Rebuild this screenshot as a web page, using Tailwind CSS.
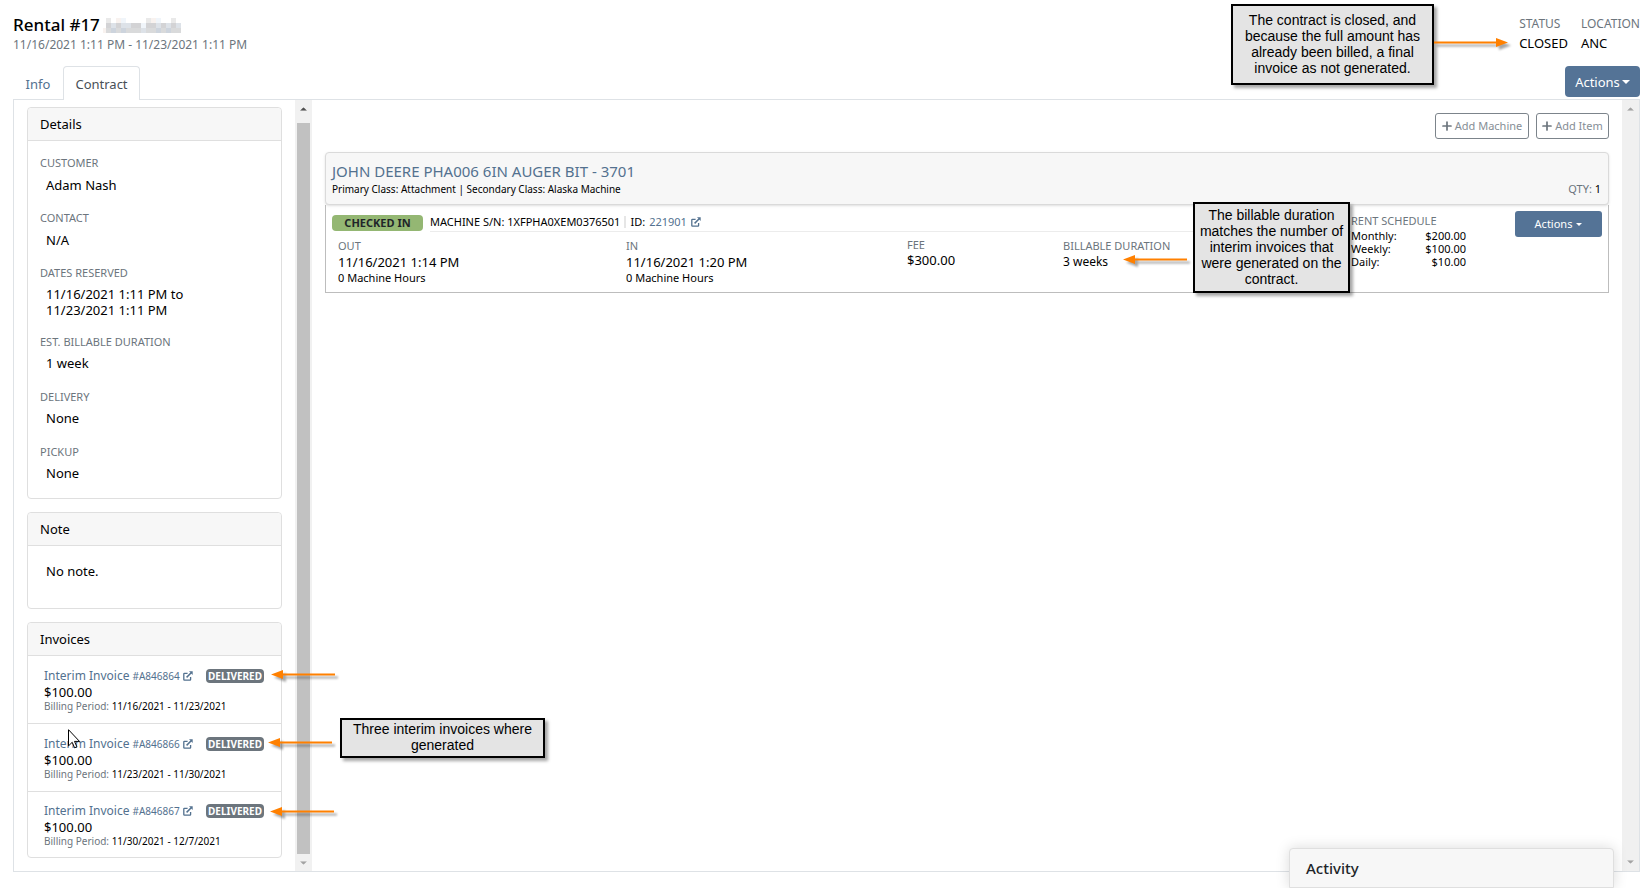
<!DOCTYPE html>
<html lang="en">
<head>
<meta charset="utf-8">
<meta name="viewport" content="width=device-width, initial-scale=1">
<title>Rental #17</title>
<script src="https://cdn.jsdelivr.net/npm/@tailwindcss/browser@4"></script>
</head>
<body class="bg-white text-black font-['Noto_Sans','Open_Sans',sans-serif] text-[13px] leading-4">
<svg class="hidden" aria-hidden="true">
  <symbol id="ext" viewBox="0 0 10 10">
    <path d="M7.6 6v2.6a.6.6 0 0 1-.6.6H1.4a.6.6 0 0 1-.6-.6V3a.6.6 0 0 1 .6-.6h3.2" fill="none" stroke="currentColor" stroke-width="1.3"/>
    <path d="M3.6 6.4 8.2 1.8" stroke="currentColor" stroke-width="1.5"/>
    <path d="M6 .3h3.7V4Z" fill="currentColor"/>
  </symbol>
  <symbol id="plus" viewBox="0 0 10 10"><path d="M5 1v8M1 5h8" stroke="currentColor" stroke-width="1.7" stroke-linecap="round"/></symbol>
  <symbol id="caret" viewBox="0 0 8 4"><path d="M0 0h8L4 4Z" fill="currentColor"/></symbol>
  <symbol id="arrow" viewBox="0 0 66 12"><path d="M10 5.5h54" stroke="#ff8000" stroke-width="2"/><path d="M0 5.5 12 1v9Z" fill="#ff8000"/></symbol>
</svg>

<div class="relative flex flex-col h-screen min-h-[888px] pl-[13px] pr-3 pb-4 overflow-hidden">
  <header class="flex justify-between h-[66px] pt-[15px]">
    <div>
      <h1 class="flex items-center gap-[3px] text-[17px] leading-5 font-medium">Rental #17
        <svg class="w-[78px] h-[15px]" viewBox="0 0 78 15" aria-label="Hidden customer name" role="img" shape-rendering="crispEdges">
          <path fill="#e9e9e9" d="M3 0h5v5H3zM43 0h5v5h-5zM68 0h5v5h-5z"/>
          <path fill="#f8f2ef" d="M13 0h5v5h-5zM48 0h5v5h-5zM0 10h3v5H0z"/>
          <path fill="#f0f5fa" d="M18 0h5v5h-5zM53 0h5v5h-5zM38 5h5v5h-5z"/>
          <path fill="#d3d3d5" d="M3 5h5v5H3zM13 5h5v5h-5zM28 5h10v5H28zM43 5h10v5H43zM58 5h5v5h-5zM68 5h5v5h-5z"/>
          <path fill="#dde2e8" d="M8 5h5v5H8zM18 5h10v5H18zM53 5h5v5h-5zM63 5h5v5h-5zM73 5h5v5h-5zM38 10h5v5h-5z"/>
          <path fill="#d9dadb" d="M3 10h5v5H3zM13 10h5v5h-5zM23 10h15v5H23zM43 10h10v5H43zM58 10h5v5h-5zM68 10h10v5H68z"/>
          <path fill="#cdd4dd" d="M8 10h5v5H8zM18 10h5v5h-5zM53 10h5v5h-5zM63 10h5v5h-5z"/>
        </svg>
      </h1>
      <p class="mt-[2px] text-[12px] text-[#6c757d]">11/16/2021 1:11 PM - 11/23/2021 1:11 PM</p>
    </div>
    <dl class="flex gap-[13px] pt-px">
      <div><dt class="text-[12px] text-[#6c757d]">STATUS</dt><dd class="mt-[3px]">CLOSED</dd></div>
      <div><dt class="text-[12px] text-[#6c757d]">LOCATION</dt><dd class="mt-[3px]">ANC</dd></div>
    </dl>
  </header>

  <div class="relative z-10 flex justify-between items-start -mb-px">
    <nav class="flex">
      <a href="#info" class="w-[50px] h-[34px] pt-[10px] text-center text-[#53718f]">Info</a>
      <a href="#contract" class="w-[77px] h-[34px] pt-[9px] text-center text-[#495057] bg-white border border-b-0 border-[#dee2e6] rounded-t">Contract</a>
    </nav>
    <button class="flex items-center justify-center gap-[2px] w-[75px] h-[31px] rounded bg-[#547396] text-white">Actions<svg class="w-2 h-1"><use href="#caret"/></svg></button>
  </div>

  <div class="flex flex-1 min-h-0 border border-[#dee2e6]">
    <aside class="w-[281px] shrink-0 pl-[13px] pr-[13px] pt-[7px] overflow-hidden">
      <section class="border border-[#dfdfdf] rounded">
        <h2 class="px-3 py-2 bg-[#f7f7f7] border-b border-[#dfdfdf] rounded-t">Details</h2>
        <dl class="px-3 pt-[14px] pb-[17px]">
          <dt class="text-[11px] text-[#6c757d]">CUSTOMER</dt><dd class="mt-[6px] mb-[17px] ml-[6px]">Adam Nash</dd>
          <dt class="text-[11px] text-[#6c757d]">CONTACT</dt><dd class="mt-[6px] mb-[17px] ml-[6px]">N/A</dd>
          <dt class="text-[11px] text-[#6c757d]">DATES RESERVED</dt><dd class="mt-[5px] mb-4 ml-[6px]">11/16/2021 1:11 PM to<br>11/23/2021 1:11 PM</dd>
          <dt class="text-[11px] text-[#6c757d]">EST. BILLABLE DURATION</dt><dd class="mt-[5px] mb-[18px] ml-[6px]">1 week</dd>
          <dt class="text-[11px] text-[#6c757d]">DELIVERY</dt><dd class="mt-[5px] mb-[18px] ml-[6px]">None</dd>
          <dt class="text-[11px] text-[#6c757d]">PICKUP</dt><dd class="mt-[5px] ml-[6px]">None</dd>
        </dl>
      </section>
      <section class="mt-[13px] border border-[#dfdfdf] rounded">
        <h2 class="px-3 py-2 bg-[#f7f7f7] border-b border-[#dfdfdf] rounded-t">Note</h2>
        <p class="px-[18px] pt-[17px] pb-[29px]">No note.</p>
      </section>
      <section class="mt-[13px] border border-[#dfdfdf] rounded">
        <h2 class="px-3 py-2 bg-[#f7f7f7] border-b border-[#dfdfdf] rounded-t">Invoices</h2>
        <ul class="divide-y divide-[#dfdfdf]">
          <li class="pl-4 pr-[17px] pt-3 pb-[11px]">
            <div class="flex items-center justify-between"><a href="#A846864" class="flex items-center gap-[3px] text-[12px] text-[#53718f]">Interim Invoice <small class="text-[10px]">#A846864</small><svg class="size-[10px]"><use href="#ext"/></svg></a><span class="px-[2px] rounded bg-[#6c757d] text-white text-[10px] leading-[14px] font-bold">DELIVERED</span></div>
            <p>$100.00</p>
            <p class="text-[10px] leading-3"><span class="text-[#6c757d]">Billing Period:</span> 11/16/2021 - 11/23/2021</p>
          </li>
          <li class="pl-4 pr-[17px] pt-3 pb-[11px]">
            <div class="flex items-center justify-between"><a href="#A846866" class="flex items-center gap-[3px] text-[12px] text-[#53718f]">Interim Invoice <small class="text-[10px]">#A846866</small><svg class="size-[10px]"><use href="#ext"/></svg></a><span class="px-[2px] rounded bg-[#6c757d] text-white text-[10px] leading-[14px] font-bold">DELIVERED</span></div>
            <p>$100.00</p>
            <p class="text-[10px] leading-3"><span class="text-[#6c757d]">Billing Period:</span> 11/23/2021 - 11/30/2021</p>
          </li>
          <li class="pl-4 pr-[17px] pt-[11px] pb-[10px]">
            <div class="flex items-center justify-between"><a href="#A846867" class="flex items-center gap-[3px] text-[12px] text-[#53718f]">Interim Invoice <small class="text-[10px]">#A846867</small><svg class="size-[10px]"><use href="#ext"/></svg></a><span class="px-[2px] rounded bg-[#6c757d] text-white text-[10px] leading-[14px] font-bold">DELIVERED</span></div>
            <p>$100.00</p>
            <p class="text-[10px] leading-3"><span class="text-[#6c757d]">Billing Period:</span> 11/30/2021 - 12/7/2021</p>
          </li>
        </ul>
      </section>
    </aside>

    <div class="flex flex-col items-center w-[17px] shrink-0 bg-[#f1f1f1]" aria-hidden="true">
      <div class="flex items-center justify-center h-[23px] pb-[6px] text-[#505050]"><svg class="w-[7px] h-1 rotate-180" viewBox="0 0 8 4"><use href="#caret"/></svg></div>
      <div class="flex-1 w-[13px] bg-[#c1c1c1]"></div>
      <div class="flex items-center justify-center h-[17px] text-[#a3a3a3]"><svg class="w-[7px] h-1" viewBox="0 0 8 4"><use href="#caret"/></svg></div>
    </div>

    <main class="flex-1 min-w-0 pl-[13px] pr-[13px] pt-[13px]">
      <div class="flex justify-end gap-[7px] text-[#868e96] text-[11px]">
        <button class="flex items-center justify-center gap-[3px] w-[94px] h-[26px] border border-[#7c848b] rounded-[3px]"><svg class="size-[10px] text-[#6c757d]"><use href="#plus"/></svg>Add Machine</button>
        <button class="flex items-center justify-center gap-[3px] w-[73px] h-[26px] border border-[#7c848b] rounded-[3px]"><svg class="size-[10px] text-[#6c757d]"><use href="#plus"/></svg>Add Item</button>
      </div>
      <article class="mt-[13px]">
        <div class="relative flex justify-between items-end h-[53px] pl-[6px] pr-[7px] pb-[7px] bg-[#f7f7f7] border border-[#dadada] rounded shadow-sm">
          <div>
            <h2 class="text-[15px] leading-5 text-[#53718f]">JOHN DEERE PHA006 6IN AUGER BIT - 3701</h2>
            <p class="text-[10px]">Primary Class: Attachment | Secondary Class: Alaska Machine</p>
          </div>
          <p class="text-[11px]"><span class="text-[#6c757d]">QTY:</span> 1</p>
        </div>
        <div class="flex items-start h-[88px] pl-[6px] pr-[6px] border border-t-0 border-[#bdbdbd]">
          <div class="flex-1 min-w-0">
            <div class="flex items-end gap-[7px] pt-2">
              <span class="w-[91px] mb-px rounded bg-[#94b773] text-[#212529] text-center text-[11px] leading-4 font-bold">CHECKED IN</span>
              <p class="flex-1 flex items-center gap-1 h-[19px] border-b border-[#ececec] text-[11px]">MACHINE S/N: 1XFPHA0XEM0376501 <span class="w-[2px] h-3 bg-[#e6e6e6]"></span> ID: <a href="#221901" class="flex items-center gap-1 text-[#53718f]">221901 <svg class="size-[10px]"><use href="#ext"/></svg></a></p>
            </div>
            <dl class="flex pl-[6px] pt-[6px]">
              <div class="w-[288px]"><dt class="text-[11px] text-[#6c757d]">OUT</dt><dd>11/16/2021 1:14 PM</dd><dd class="text-[11px]">0 Machine Hours</dd></div>
              <div class="w-[281px]"><dt class="text-[11px] text-[#6c757d]">IN</dt><dd>11/16/2021 1:20 PM</dd><dd class="text-[11px]">0 Machine Hours</dd></div>
              <div class="w-[156px]"><dt class="text-[11px] leading-[14px] text-[#6c757d]">FEE</dt><dd>$300.00</dd></div>
              <div><dt class="text-[11px] text-[#6c757d]">BILLABLE DURATION</dt><dd class="text-[12px]">3 weeks</dd></div>
            </dl>
          </div>
          <table class="mt-2 mr-[49px] w-[115px] text-[11px] leading-[13px]">
            <caption class="text-left text-[11px] leading-4 text-[#6c757d]">RENT SCHEDULE</caption>
            <tbody>
              <tr><th class="text-left font-normal">Monthly:</th><td class="text-right">$200.00</td></tr>
              <tr><th class="text-left font-normal">Weekly:</th><td class="text-right">$100.00</td></tr>
              <tr><th class="text-left font-normal">Daily:</th><td class="text-right">$10.00</td></tr>
            </tbody>
          </table>
          <button class="flex items-center justify-center gap-1 w-[87px] h-[26px] mt-[6px] rounded-[3px] bg-[#547396] text-white text-[11px]">Actions<svg class="w-[6px] h-[3px]" viewBox="0 0 8 4"><use href="#caret"/></svg></button>
        </div>
      </article>
    </main>

    <div class="flex flex-col justify-between items-center w-[17px] shrink-0 bg-[#f0f0f0] py-[7px] text-[#a3a3a3]" aria-hidden="true">
      <svg class="w-[7px] h-1 rotate-180" viewBox="0 0 8 4"><use href="#caret"/></svg>
      <svg class="w-[7px] h-1" viewBox="0 0 8 4"><use href="#caret"/></svg>
    </div>
  </div>

  <!-- Docked activity drawer -->
  <section class="absolute z-20 right-[38px] bottom-0 w-[325px] h-10 pl-4 pt-[9px] bg-[#f7f7f7] border border-[#dfdfdf] rounded-t shadow-[0_0_14px_rgba(0,0,0,0.15)]">
    <h2 class="text-[15px] leading-5 font-medium text-[#212529]">Activity</h2>
  </section>

  <!-- Annotations laid over the page -->
  <div class="font-['Liberation_Sans',Arial,sans-serif] text-[14px] text-center">
    <p class="absolute z-20 right-[218px] top-1 w-[203px] h-[81px] pt-[6px] border-2 border-black bg-[#e4e4e4] shadow-[3px_3px_3px_rgba(0,0,0,0.35)]">The contract is closed, and<br>because the full amount has<br>already been billed, a final<br>invoice as not generated.</p>
    <p class="absolute z-20 right-[302px] top-[202px] w-[157px] h-[91px] pt-[3px] border-2 border-black bg-[#e4e4e4] shadow-[3px_3px_3px_rgba(0,0,0,0.35)] whitespace-nowrap">The billable duration<br>matches the number of<br>interim invoices that<br>were generated on the<br>contract.</p>
    <p class="absolute z-20 left-[340px] top-[718px] w-[205px] h-10 pt-px border-2 border-black bg-[#e4e4e4] shadow-[3px_3px_3px_rgba(0,0,0,0.35)]">Three interim invoices where<br>generated</p>
  </div>
  <svg class="absolute z-20 left-[271px] top-[669px] w-[66px] h-3 drop-shadow-[3px_3px_1px_rgba(0,0,0,0.35)]"><use href="#arrow"/></svg>
  <svg class="absolute z-20 left-[268px] top-[737px] w-[66px] h-3 drop-shadow-[3px_3px_1px_rgba(0,0,0,0.35)]"><use href="#arrow"/></svg>
  <svg class="absolute z-20 left-[270px] top-[806px] w-[66px] h-3 drop-shadow-[3px_3px_1px_rgba(0,0,0,0.35)]"><use href="#arrow"/></svg>
  <svg class="absolute z-20 right-[463px] top-[254px] w-[66px] h-3 drop-shadow-[3px_3px_1px_rgba(0,0,0,0.35)]"><use href="#arrow"/></svg>
  <svg class="absolute z-20 right-[144px] top-[37px] w-[74px] h-3 drop-shadow-[3px_3px_1px_rgba(0,0,0,0.35)]" viewBox="0 0 74 12"><path d="M0 5.5h64" stroke="#ff8000" stroke-width="2"/><path d="M74 5.5 62 1v9Z" fill="#ff8000"/></svg>
  <svg class="absolute z-20 left-[68px] top-[729px] w-3 h-5" viewBox="0 0 12 20"><path d="M.5.7v16.2l3.7-3.6 2.4 5.5 2.3-1-2.4-5.4h5Z" fill="#fff" stroke="#000"/></svg>
</div>
</body>
</html>
